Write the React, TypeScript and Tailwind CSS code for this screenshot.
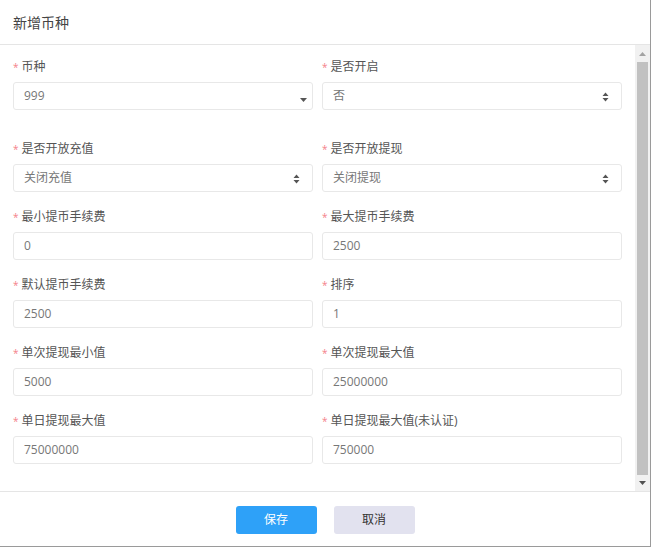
import React from "react";

type Field = { label: string; value: string; kind?: "select" | "select2" };

const rows: [Field, Field][] = [
  [
    { label: "币种", value: "999", kind: "select2" },
    { label: "是否开启", value: "否", kind: "select" },
  ],
  [
    { label: "是否开放充值", value: "关闭充值", kind: "select" },
    { label: "是否开放提现", value: "关闭提现", kind: "select" },
  ],
  [
    { label: "最小提币手续费", value: "0" },
    { label: "最大提币手续费", value: "2500" },
  ],
  [
    { label: "默认提币手续费", value: "2500" },
    { label: "排序", value: "1" },
  ],
  [
    { label: "单次提现最小值", value: "5000" },
    { label: "单次提现最大值", value: "25000000" },
  ],
  [
    { label: "单日提现最大值", value: "75000000" },
    { label: "单日提现最大值(未认证)", value: "750000" },
  ],
];

function Arrows({ kind }: { kind?: Field["kind"] }) {
  if (kind === "select2") {
    return (
      <svg width="7" height="4" viewBox="0 0 7 4" className="absolute right-[5px] top-[15px]">
        <path d="M0 0h7L3.5 4z" fill="#555" />
      </svg>
    );
  }
  if (kind === "select") {
    return (
      <svg width="7" height="10" viewBox="0 0 7 10" className="absolute right-[12px] top-[9px]">
        <path d="M3.5 0.5L6.5 4H0.5z M3.5 9.5L0.5 6h6z" fill="#555" />
      </svg>
    );
  }
  return null;
}

function FormField({ f, first }: { f: Field; first: boolean }) {
  return (
    <div className={first ? "pb-[14px]" : ""}>
      <div className="flex h-[16px] items-center text-[12px] leading-[16px] text-[#555]">
        <span className="mr-[3px] text-[10px] text-[#f47f8a]">*</span>
        {f.label}
      </div>
      <div className="relative mt-[7px] flex h-[28px] items-center rounded-[3px] border border-[#e8e8e8] bg-white pl-[10px] text-[12px] text-[#777]">
        {f.value}
        <Arrows kind={f.kind} />
      </div>
    </div>
  );
}

export default function App() {
  return (
    <div
      className="flex h-[547px] w-[651px] flex-col border-r border-b border-[#9a9a9a] bg-white"
      style={{ fontFamily: '"Open Sans", "Noto Sans CJK SC", sans-serif' }}
    >
      <div className="flex h-[45px] shrink-0 items-center border-b border-[#e5e5e5] pl-[13px] text-[14px] text-[#444]">
        新增币种
      </div>

      <div className="flex h-[446px] shrink-0">
        <div className="flex-1 pl-[13px] pt-[14px]">
          <div className="grid w-[609px] grid-cols-[300px_300px] gap-x-[9px] gap-y-[17px]">
            {rows.map((r, i) => (
              <React.Fragment key={i}>
                <FormField f={r[0]} first={i === 0} />
                <FormField f={r[1]} first={i === 0} />
              </React.Fragment>
            ))}
          </div>
        </div>

        <div className="flex w-[15px] flex-col bg-[#f1f1f1]">
          <div className="flex h-[17px] items-center justify-center">
            <svg width="7" height="4" viewBox="0 0 7 4">
              <path d="M3.5 0L7 4H0z" fill="#a3a3a3" />
            </svg>
          </div>
          <div className="mx-auto w-[11px] flex-1 bg-[#c1c1c1]" />
          <div className="flex h-[16px] items-center justify-center">
            <svg width="7" height="4" viewBox="0 0 7 4">
              <path d="M0 0h7L3.5 4z" fill="#505050" />
            </svg>
          </div>
        </div>
      </div>

      <div className="flex flex-1 justify-center gap-[17px] border-t border-[#e5e5e5] pt-[14px]">
        <button className="h-[28px] w-[81px] rounded-[3px] bg-[#2ea1f8] text-[12px] text-white">
          保存
        </button>
        <button className="h-[28px] w-[81px] rounded-[3px] bg-[#e2e2ef] text-[12px] text-[#333]">
          取消
        </button>
      </div>
    </div>
  );
}
